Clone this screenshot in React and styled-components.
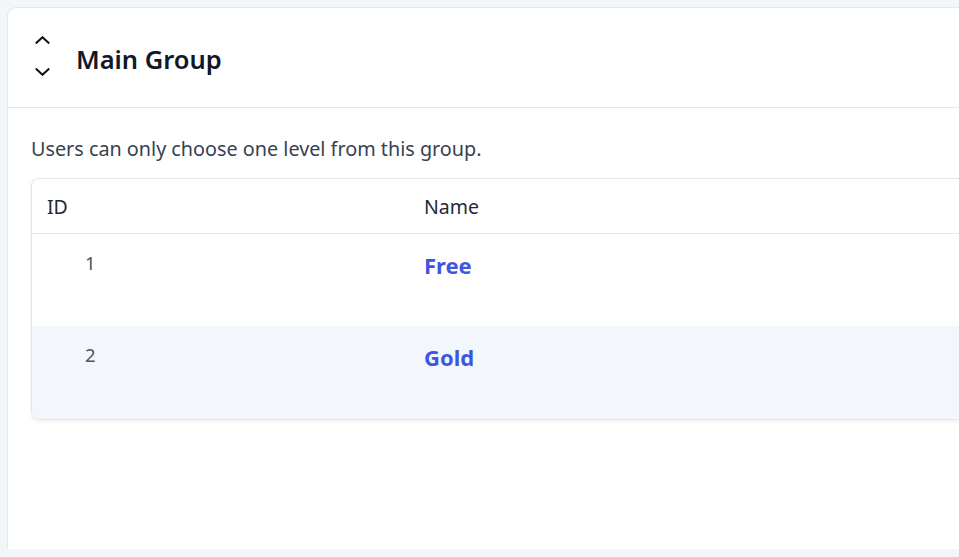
import React from "react";
import styled, { createGlobalStyle } from "styled-components";

const Global = createGlobalStyle`
  html, body { margin: 0; padding: 0; background: #f3f6f9; }
  body { font-family: "Noto Sans", "Open Sans", sans-serif; overflow: hidden; }
`;

const Page = styled.div`
  width: 959px;
  height: 557px;
  box-sizing: border-box;
  padding: 7px 0 0 7px;
  background: #f3f6f9;
  overflow: hidden;
`;

const Card = styled.section`
  width: 980px;
  height: 542px;
  box-sizing: border-box;
  background: #fff;
  border: 1px solid #e3e6ea;
  border-right: none;
  border-bottom: none;
  border-top-left-radius: 9px;
  display: flex;
  flex-direction: column;
`;

const Header = styled.header`
  height: 100px;
  box-sizing: border-box;
  border-bottom: 1px solid #e5e7eb;
  display: flex;
  align-items: center;
  padding-left: 27px;
  gap: 26px;
`;

const Sorter = styled.div`
  display: flex;
  flex-direction: column;
  gap: 24px;
  width: 15px;
  margin-bottom: 3px;
`;

const Title = styled.h2`
  margin: 0;
  margin-top: 2px;
  font-size: 25.5px;
  font-weight: 600;
  color: #111827;
`;

const Body = styled.div`
  padding: 27px 0 0 23px;
`;

const Desc = styled.p`
  margin: 0 0 15px;
  font-size: 19.8px;
  line-height: 28px;
  color: #374151;
`;

const Table = styled.div`
  border: 1px solid #e3e6ea;
  border-right: none;
  border-radius: 8px 0 0 8px;
  box-shadow: 0 2px 4px rgba(17, 24, 39, 0.06);
  overflow: hidden;
`;

const Row = styled.div`
  display: grid;
  grid-template-columns: 392px 1fr;
  height: ${(p) => p.$h}px;
  box-sizing: border-box;
  background: ${(p) => (p.$alt ? "#f3f6fa" : "#fff")};
  border-bottom: ${(p) => (p.$head ? "1px solid #e5e7eb" : "none")};
`;

const HeadCell = styled.div`
  padding-left: ${(p) => p.$pl}px;
  display: flex;
  align-items: center;
  font-size: 19.5px;
  color: #1f2937;
`;

const NumCell = styled.div`
  padding: 17px 0 0 53px;
  font-size: 18.5px;
  line-height: 24px;
  color: #4b5563;
`;

const NameCell = styled.div`
  padding: 17px 0 0 0;
  font-size: 22px;
  line-height: 28px;
  font-weight: 700;
  color: #3e56e0;
`;

const Chevron = ({ up }) => (
  <svg width="15" height="8" viewBox="0 0 15 8" fill="none">
    <path
      d={up ? "M1.5 6.8 L7.5 1.2 L13.5 6.8" : "M1.5 1.2 L7.5 6.8 L13.5 1.2"}
      stroke="#111"
      strokeWidth="2"
      strokeLinecap="square"
    />
  </svg>
);

const levels = [
  { id: 1, name: "Free" },
  { id: 2, name: "Gold" },
];

export default function App() {
  return (
    <Page>
      <Global />
      <Card>
        <Header>
          <Sorter>
            <Chevron up />
            <Chevron />
          </Sorter>
          <Title>Main Group</Title>
        </Header>
        <Body>
          <Desc>Users can only choose one level from this group.</Desc>
          <Table>
            <Row $head $h={55}>
              <HeadCell $pl={15}>ID</HeadCell>
              <HeadCell $pl={0}>Name</HeadCell>
            </Row>
            {levels.map((l, i) => (
              <Row key={l.id} $alt={i % 2 === 1} $h={i === 0 ? 92 : 93}>
                <NumCell>{l.id}</NumCell>
                <NameCell>{l.name}</NameCell>
              </Row>
            ))}
          </Table>
        </Body>
      </Card>
    </Page>
  );
}
